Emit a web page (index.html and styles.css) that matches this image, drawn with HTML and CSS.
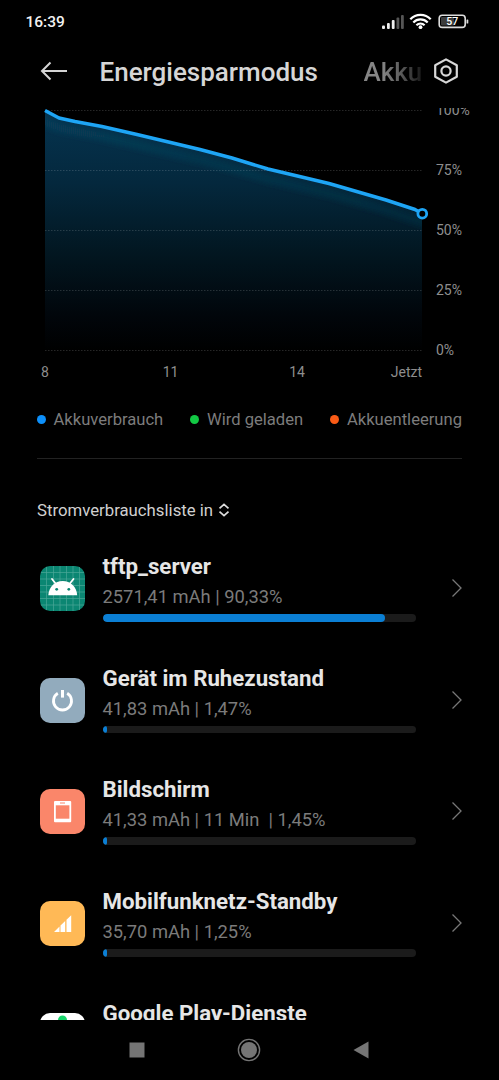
FILE: index.html
```html
<!DOCTYPE html>
<html lang="de">
<head>
  <meta charset="UTF-8">
  <meta name="viewport" content="width=device-width, initial-scale=1">
  <title>Energiesparmodus</title>
  <link rel="stylesheet" href="styles.css">
</head>
<body>

  <!-- Status bar -->
  <div class="status-bar">
    <span class="clock">16:39</span>
    <svg class="status-icons" width="88" height="18" viewBox="0 0 88 18">
      <g fill="#eee">
        <rect x="1" y="12.500" width="3" height="3.500" rx="1"/>
        <rect x="6" y="10" width="2.800" height="6" rx="1"/>
        <rect x="10.800" y="7" width="2.800" height="9" rx="1"/>
      </g>
      <g fill="#555">
        <rect x="15.500" y="4.500" width="2.800" height="11.500" rx="1"/>
        <rect x="20" y="2" width="2.800" height="14" rx="1"/>
      </g>
      <g fill="none" stroke="#fff" stroke-width="2.200">
        <path d="M29.300 6.200a14 14 0 0 1 20.400 0"/>
        <path d="M32.300 9.400a10 10 0 0 1 14.400 0"/>
        <path d="M35.400 12.300a6 6 0 0 1 8.200 0"/>
      </g>
      <circle cx="39.500" cy="14.200" r="1.900" fill="#fff"/>
      <rect x="58.200" y="2.200" width="26" height="12.200" rx="3" fill="none" stroke="#ddd" stroke-width="1.600"/>
      <rect x="60" y="4" width="13" height="8.600" rx="1" fill="#3c3c3c"/>
      <rect x="85.500" y="6.500" width="1.800" height="4" rx="0.600" fill="#ddd"/>
      <text class="battery-level" x="71.200" y="12" text-anchor="middle">57</text>
    </svg>
  </div>

  <!-- Title tabs -->
  <header class="header">
    <svg class="back" width="28" height="20" viewBox="0 0 28 20" fill="none" stroke="#d4d4d4" stroke-width="2">
      <path d="M27 10H2M10.500 1.500L2 10l8.500 8.500"/>
    </svg>
    <h1>Energiesparmodus</h1>
    <span class="next-tab">Akku</span>
    <svg class="settings" width="26" height="26" viewBox="0 0 26 26" fill="none" stroke="#d8d8d8" stroke-width="2.200" stroke-linejoin="round">
      <path d="M13 1.400L23.800 7.200V18.800L13 24.600L2.200 18.800V7.200Z"/>
      <circle cx="13" cy="13" r="4.600"/>
    </svg>
  </header>

  <main class="content">

    <!-- Battery chart -->
    <svg class="chart" width="499" height="279" viewBox="0 108 499 279">
      <defs>
        <linearGradient id="fill" x1="0" y1="111" x2="0" y2="351" gradientUnits="userSpaceOnUse">
          <stop offset="0" stop-color="#053450"/>
          <stop offset="0.300" stop-color="#04283d"/>
          <stop offset="0.600" stop-color="#021620"/>
          <stop offset="0.850" stop-color="#01060b"/>
          <stop offset="1" stop-color="#000"/>
        </linearGradient>
        <linearGradient id="glow" x1="45" y1="0" x2="422" y2="0" gradientUnits="userSpaceOnUse">
          <stop offset="0" stop-color="#0f4862" stop-opacity="0.450"/>
          <stop offset="1" stop-color="#0a3347" stop-opacity="0.500"/>
        </linearGradient>
        <filter id="soft" x="-5%" y="-20%" width="110%" height="140%">
          <feGaussianBlur stdDeviation="2.500"/>
        </filter>
        <clipPath id="area">
          <path d="M45 111L59 118L102 126.500L200 149.500L268 169L329 183.500L386 200L422 213.500V351H45Z"/>
        </clipPath>
      </defs>
      <g clip-path="url(#area)">
        <rect x="45" y="108" width="377" height="243" fill="url(#fill)"/>
        <path d="M40 120L59 128L102 136.500L200 159.500L268 179L329 193.500L386 210L427 224" fill="none" stroke="url(#glow)" stroke-width="9" filter="url(#soft)"/>
      </g>
      <path class="grid" d="M45 110.500H422M45 170.500H422M45 230.500H422M45 290.500H422M45 350.500H422"/>
      <path class="line" d="M45 110.500L59 118L75 121.500L102 126.500L137 134.500L200 149.500L232 158L268 169L329 183.500L386 200L415 209.500L422 213.500"/>
      <circle cx="422.300" cy="213.700" r="4.400" fill="#000" stroke="#1ea5f5" stroke-width="2.800"/>
      <g class="axis">
        <text x="436" y="115">100%</text>
        <text x="436" y="175">75%</text>
        <text x="436" y="235">50%</text>
        <text x="436" y="295">25%</text>
        <text x="436" y="355">0%</text>
        <text x="45" y="376.500" text-anchor="middle">8</text>
        <text x="170.500" y="376.500" text-anchor="middle">11</text>
        <text x="297" y="376.500" text-anchor="middle">14</text>
        <text x="422" y="376.500" text-anchor="end">Jetzt</text>
      </g>
    </svg>

    <ul class="legend">
      <li class="usage">Akkuverbrauch</li>
      <li class="charging">Wird geladen</li>
      <li class="drain">Akkuentleerung</li>
    </ul>

    <div class="sort">
      Stromverbrauchsliste in
      <svg width="12" height="14" viewBox="0 0 12 14" fill="none" stroke="#ddd" stroke-width="1.700">
        <path d="M1.500 5.300L6 1.300l4.500 4M1.500 8.700L6 12.700l4.500-4"/>
      </svg>
    </div>

    <!-- Consumption list -->
    <section class="apps">
      <div class="app">
        <svg class="icon" width="45" height="45" viewBox="0 0 45 45">
          <rect width="45" height="45" rx="10" fill="#0b8672"/>
          <path d="M6.500 1V44M13.500 0V45M20 0V45M26.500 0V45M33 0V45M39.500 1V44M1 6.500H44M0 13H45M0 19.500H45M0 26H45M0 32.500H45M1 39H44" stroke="#4aa898" stroke-width="0.700"/>
          <path d="M12 13l4 5M33.500 13l-4 5" stroke="#fff" stroke-width="1.800" stroke-linecap="round"/>
          <path d="M8.300 29.200C8.800 21 15 15 22.700 15S36.700 21 37.200 29.200Z" fill="#fff"/>
          <circle cx="16.700" cy="23.300" r="1.400" fill="#0b8672"/>
          <circle cx="28.800" cy="23.300" r="1.400" fill="#0b8672"/>
        </svg>
        <div class="info">
          <h2>tftp_server</h2>
          <p>2571,41 mAh | 90,33%</p>
          <div class="bar"><span style="width: 90.33%"></span></div>
        </div>
        <svg class="chevron" width="12" height="20" viewBox="0 0 12 20"><path d="M1.500 1.500L10 10l-8.500 8.500"/></svg>
      </div>

      <div class="app">
        <svg class="icon" width="45" height="45" viewBox="0 0 45 45">
          <rect width="45" height="45" rx="10" fill="#92abbd"/>
          <path d="M17.800 15.300a9 9 0 1 0 9.400 0" fill="none" stroke="#fff" stroke-width="2.800"/>
          <path d="M22.500 12v7.600" stroke="#fff" stroke-width="3"/>
        </svg>
        <div class="info">
          <h2>Gerät im Ruhezustand</h2>
          <p>41,83 mAh | 1,47%</p>
          <div class="bar"><span style="width: 1.47%"></span></div>
        </div>
        <svg class="chevron" width="12" height="20" viewBox="0 0 12 20"><path d="M1.500 1.500L10 10l-8.500 8.500"/></svg>
      </div>

      <div class="app">
        <svg class="icon" width="45" height="45" viewBox="0 0 45 45">
          <rect width="45" height="45" rx="10" fill="#fa866a"/>
          <rect x="14" y="12" width="17.200" height="21.200" rx="1" fill="#fff"/>
          <rect x="15.800" y="16.300" width="13.600" height="13.400" fill="#fa866a"/>
          <rect x="20" y="13.500" width="5" height="1" fill="#fa866a"/>
        </svg>
        <div class="info">
          <h2>Bildschirm</h2>
          <p>41,33 mAh | 11 Min&nbsp; | 1,45%</p>
          <div class="bar"><span style="width: 1.45%"></span></div>
        </div>
        <svg class="chevron" width="12" height="20" viewBox="0 0 12 20"><path d="M1.500 1.500L10 10l-8.500 8.500"/></svg>
      </div>

      <div class="app">
        <svg class="icon" width="45" height="45" viewBox="0 0 45 45">
          <rect width="45" height="45" rx="10" fill="#ffb956"/>
          <path fill="#fff" d="M14 31L19.500 25.500V31zM20.500 24.500L25.200 20V31H20.500zM26.500 18.700L31.200 14.200V31H26.500z"/>
        </svg>
        <div class="info">
          <h2>Mobilfunknetz-Standby</h2>
          <p>35,70 mAh | 1,25%</p>
          <div class="bar"><span style="width: 1.25%"></span></div>
        </div>
        <svg class="chevron" width="12" height="20" viewBox="0 0 12 20"><path d="M1.500 1.500L10 10l-8.500 8.500"/></svg>
      </div>

      <div class="app">
        <svg class="icon" width="45" height="45" viewBox="0 0 45 45">
          <rect width="45" height="45" rx="10" fill="#fff"/>
          <circle cx="22.500" cy="7" r="4.500" fill="#18d66b"/>
        </svg>
        <div class="info">
          <h2>Google Play-Dienste</h2>
        </div>
      </div>
    </section>
  </main>

  <!-- System navigation -->
  <nav class="nav-bar">
    <svg width="16" height="16" viewBox="0 0 16 16"><rect x="0.500" y="0.500" width="15" height="15" fill="#757575"/></svg>
    <svg width="24" height="24" viewBox="0 0 24 24">
      <circle cx="12" cy="12" r="10.600" fill="none" stroke="#757575" stroke-width="1.400"/>
      <circle cx="12" cy="12" r="8" fill="#757575"/>
    </svg>
    <svg width="16" height="18" viewBox="0 0 16 18"><path d="M15.500 0.500v17L0.500 9z" fill="#757575"/></svg>
  </nav>

</body>
</html>
```
FILE: styles.css
```css
* {
  box-sizing: border-box;
}

body {
  margin: 0;
  height: 1080px;
  display: flex;
  flex-direction: column;
  overflow: hidden;
  font-family: Roboto, sans-serif;
  background: #000;
  color: #e6e6e6;
}

h1, h2, p, ul {
  margin: 0;
  padding: 0;
}

svg {
  display: block;
  flex: none;
}

.status-bar {
  height: 44px;
  padding: 0 30px 0 25.5px;
  display: flex;
  align-items: center;
  justify-content: space-between;
}

.clock {
  font-size: 15.5px;
  font-weight: 500;
  color: #f2f2f2;
}

.battery-level {
  font-size: 10.5px;
  font-weight: 500;
  fill: #fff;
}

.header {
  height: 64px;
  padding: 0 40.5px 10px 40px;
  display: flex;
  align-items: center;
  white-space: nowrap;
}

.header h1 {
  margin: 2px 0 0 31.5px;
  font-size: 26px;
  font-weight: 500;
  color: #d6d6d6;
}

.next-tab {
  margin: 2px 0 0 auto;
  width: 59px;
  overflow: hidden;
  font-size: 26px;
  font-weight: 500;
  color: transparent;
  background: linear-gradient(to right, #858585 30%, #606060 60%, #151515);
  background-clip: text;
  -webkit-background-clip: text;
}

.settings {
  margin-left: 10px;
}

.content {
  flex: 1;
  min-height: 0;
  overflow: hidden;
}

.grid {
  stroke: #fff;
  stroke-opacity: 0.15;
  stroke-dasharray: 1.5 1.5;
}

.line {
  fill: none;
  stroke: #1ea5f5;
  stroke-width: 3.5;
  stroke-linejoin: round;
}

.axis {
  font-size: 14px;
  fill: #8e8e8e;
}

.legend {
  margin: 0 37px;
  height: 72px;
  padding-bottom: 6px;
  display: flex;
  align-items: center;
  justify-content: space-between;
  border-bottom: 1px solid #222;
  list-style: none;
  font-size: 16.6px;
  line-height: 20px;
  color: #7c7c7c;
}

.legend li {
  display: flex;
  align-items: center;
  gap: 7.5px;
}

.legend li::before {
  content: "";
  width: 9px;
  height: 9px;
  border-radius: 50%;
}

.usage::before {
  background: #0d90fb;
}

.charging::before {
  background: #12c944;
}

.drain::before {
  background: #fb5b16;
}

.sort {
  margin: 41px 37px 0;
  display: flex;
  align-items: center;
  gap: 5px;
  font-size: 16.75px;
  line-height: 20px;
  color: #d0d0d0;
}

.apps {
  padding: 34px 36px 0 40px;
}

.app {
  height: 111.7px;
  display: flex;
}

.icon {
  margin-top: 12px;
}

.info {
  width: 313px;
  margin-left: 17.5px;
}

.info h2 {
  font-size: 22.25px;
  font-weight: 700;
  line-height: 24px;
  white-space: nowrap;
}

.info p {
  margin-top: 7px;
  font-size: 18.35px;
  line-height: 24px;
  color: #7b7b7b;
}

.bar {
  height: 7.5px;
  margin-top: 5px;
  overflow: hidden;
  border-radius: 4px;
  background: #1b1b1b;
}

.bar span {
  display: block;
  min-width: 4px;
  height: 100%;
  border-radius: 4px;
  background: #0b7fd4;
}

.chevron {
  margin: 24px 0 0 auto;
  fill: none;
  stroke: #777;
  stroke-width: 1.3;
}

.nav-bar {
  height: 60px;
  padding: 0 130px 0 129px;
  display: flex;
  align-items: center;
  justify-content: space-between;
}
```
